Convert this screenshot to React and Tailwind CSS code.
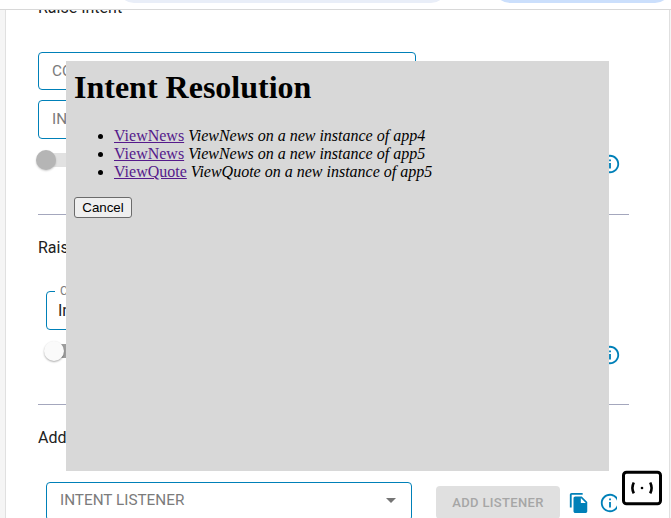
const INFO = "M11 7h2v2h-2zm0 4h2v6h-2zm1-9C6.48 2 2 6.48 2 12s4.48 10 10 10 10-4.48 10-10S17.52 2 12 2zm0 18c-4.41 0-8-3.59-8-8s3.59-8 8-8 8 3.59 8 8-3.59 8-8 8z";
const COPY = "M16 1H4c-1.1 0-2 .9-2 2v14h2V3h12V1zm-1 4 6 6v10c0 1.1-.9 2-2 2H7.99C6.89 23 6 22.1 6 21V7c0-1.1.89-2 1.99-2h7zm-1 7h5.5L14 6.5V12z";

function Icon({ path, className = "" }) {
  return (
    <svg viewBox="0 0 24 24" className={"size-[22px] shrink-0 fill-[#0080b8] " + className}>
      <path d={path} />
    </svg>
  );
}

const intents = [
  { name: "ViewNews", app: "app4" },
  { name: "ViewNews", app: "app5" },
  { name: "ViewQuote", app: "app5" },
];

function ResolverDialog() {
  return (
    <div className="absolute left-[66px] top-[61px] h-[410px] w-[543px] bg-[#d8d8d8] px-2 pt-2 font-['Liberation_Serif',serif] text-[16px] leading-[18px] text-black">
      <h1 className="text-[32px] font-bold leading-[37px]">Intent Resolution</h1>
      <ul className="mt-[21px] list-disc pl-10">
        {intents.map((intent, i) => (
          <li key={i} className="h-[18px] whitespace-nowrap">
            <a href="#" className="text-[#551a8b] underline">{intent.name}</a>{" "}
            <em>{intent.name} on a new instance of {intent.app}</em>
          </li>
        ))}
      </ul>
      <button className="mt-4 flex h-[21px] w-[58px] items-center justify-center rounded-[3px] border border-[#6b6b6b] bg-[#efefef] font-['Liberation_Sans',sans-serif] text-[13.33px] leading-none">
        Cancel
      </button>
    </div>
  );
}

export default function App() {
  return (
    <div className="relative flex h-[518px] w-[671px] flex-col overflow-hidden bg-[#f5f5f5] font-[Roboto,sans-serif] text-[#212121]">
      <header className="flex h-[10px] shrink-0 items-start overflow-hidden border-b border-[#d8d8d8] bg-white">
        <div className="-mt-[29px] ml-[118px] h-8 w-[329px] shrink-0 rounded-full bg-[#e9eef8]" />
        <div className="-mt-[29px] ml-[47px] h-8 w-[177px] shrink-0 rounded-full bg-[#cbdffc]" />
      </header>

      <main className="ml-[5px] flex h-[508px] w-[665px] flex-col overflow-hidden border-x border-[#e0e0e0] bg-white pl-8">
        <h2 className="-mt-[14px] h-6 shrink-0 text-[16px] leading-6">Raise Intent</h2>
        <div className="mt-[32px] flex h-[38px] w-[378px] shrink-0 items-center rounded border border-[#0080b8] pl-[13px] text-[15.3px] text-[#7b7b7b]">
          CO
        </div>
        <div className="mt-[10px] flex h-[39px] w-[378px] shrink-0 items-center rounded border border-[#0080b8] pb-px pl-[13px] text-[15.3px] text-[#7b7b7b]">
          IN
        </div>
        <div className="mt-[11px] flex h-[28px] w-[583px] shrink-0 items-center justify-between">
          <div className="-ml-[2px] -mt-[8px] flex items-center">
            <div className="z-10 size-[20px] rounded-full bg-[#b5b5b5] shadow-[0_1px_2px_#0003]" />
            <div className="-ml-2 h-[14px] w-7 rounded-full bg-[#e1e1e1]" />
          </div>
          <Icon path={INFO} />
        </div>

        <section className="mt-[36px] h-[190px] w-[591px] shrink-0 border-t border-[#a4a7bd]">
          <h2 className="mt-[21px] h-6 text-[16px] leading-6">Rais</h2>
          <div className="ml-2 mt-[23px] flex h-[47px] w-[366px] flex-col justify-end">
            <fieldset className="h-[47px] rounded border border-[#0080b8] pl-2">
              <legend className="px-[5px] text-[12px] leading-[16px] text-[#7b7b7b]">C</legend>
              <div className="pl-[3px] text-[16px] leading-6">In</div>
            </fieldset>
          </div>
          <div className="mt-[10px] flex h-[30px] w-[583px] items-center justify-between">
            <div className="-mt-[8px] ml-[6px] flex items-center">
              <div className="z-10 size-[20px] rounded-full bg-[#fafafa] shadow-[0_1px_2px_#0005]" />
              <div className="-ml-[10px] h-[14px] w-6 rounded-full bg-[#9e9e9e]" />
            </div>
            <Icon path={INFO} />
          </div>
        </section>

        <section className="h-[120px] w-[591px] shrink-0 border-t border-[#a4a7bd]">
          <h2 className="mt-[21px] h-6 text-[16px] leading-6">Add</h2>
          <div className="ml-2 mt-[32px] flex items-start">
            <div className="flex h-[39px] w-[366px] items-center justify-between rounded border border-[#0080b8] pb-[2px] pl-[13px] pr-[15px] text-[15.3px] text-[#7b7b7b]">
              <span>INTENT LISTENER</span>
              <svg viewBox="0 0 10 5" className="h-[5px] w-[10px] fill-[#757575]"><path d="M0 0h10L5 5z" /></svg>
            </div>
            <button className="ml-6 mt-1 h-[33px] w-[124px] shrink-0 rounded bg-[#e0e0e0] text-[13px] font-medium tracking-[0.35px] text-[#a6a6a6]">
              ADD LISTENER
            </button>
            <Icon path={COPY} className="ml-2 mt-[10px]" />
            <div className="ml-[9px] mt-[10px] w-[18px] overflow-hidden">
              <Icon path={INFO} />
            </div>
          </div>
        </section>
      </main>

      <ResolverDialog />

      <svg viewBox="0 0 42 36" className="absolute left-[621px] top-[470px] h-[36px] w-[42px]" fill="none" stroke="black">
        <rect x="2.5" y="2.3" width="37" height="31.5" rx="3" fill="white" strokeWidth="3" />
        <path d="M12.8 12.5Q10 18 12.8 23.3M29.2 12.5Q32 18 29.2 23.3" strokeWidth="2.6" />
        <circle cx="21" cy="18" r="1.3" fill="black" stroke="none" />
      </svg>
    </div>
  );
}
